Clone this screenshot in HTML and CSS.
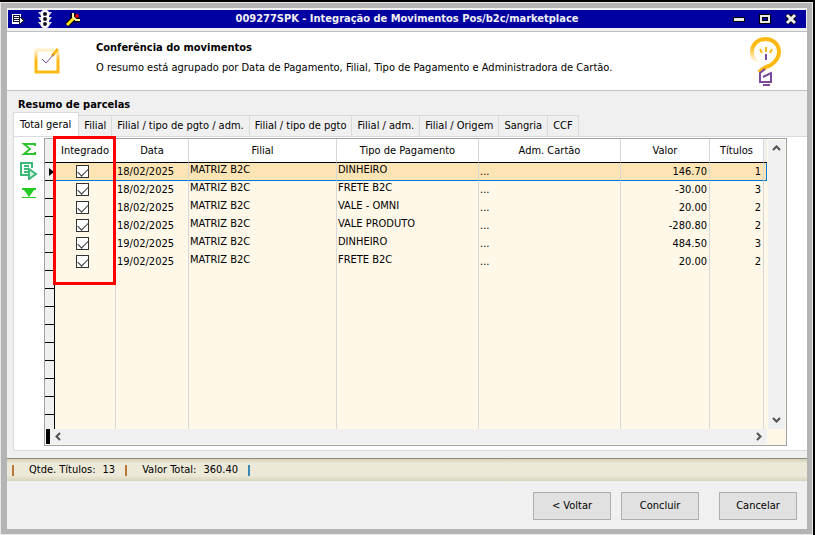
FILE: index.html
```html
<!DOCTYPE html>
<html lang="pt-BR">
<head>
    <meta charset="UTF-8">
    <title>009277SPK - Integração de Movimentos</title>
    <link rel="stylesheet" href="styles.css">
</head>
<body>
    <div class="window">
        <header class="titlebar">
            <div class="title-icons">
                <svg width="14" height="14" viewBox="0 0 14 14" shape-rendering="crispEdges">
                    <path d="M1 2h9v10H1z" fill="#fff"/>
                    <path d="M2 3h7v8H2z" fill="#000080"/>
                    <path d="M2 3h7v8H2z" fill="#101040"/>
                    <path d="M3 4h6v1H3zM3 6h5v1H3zM3 8h5v1H3zM2 10h7v1H2z" fill="#fff"/>
                    <path d="M8 4l5 4.500L8 13z" fill="#fff" stroke="#222" stroke-width="1"/>
                </svg>
                <svg width="16" height="18" viewBox="0 0 16 18">
                    <path d="M1 2h14l-3 4h-8zM1 7h14l-3 4h-8zM1 12h14l-3 4h-8z" fill="#ddd"/>
                    <rect x="4" y="0" width="8" height="18" rx="3" fill="#fff"/>
                    <circle cx="8" cy="4" r="2" fill="#112"/>
                    <circle cx="8" cy="9" r="2" fill="#112"/>
                    <circle cx="8" cy="14" r="2" fill="#112"/>
                </svg>
                <svg width="16" height="16" viewBox="0 0 16 16" fill="none">
                    <path d="M2 14l7-7M8 2v4l3 3h4" stroke="#000" stroke-width="5"/>
                    <path d="M2 14l7-7" stroke="#ffe020" stroke-width="3"/>
                    <path d="M8 2v4l3 3h4" stroke="#fff4a0" stroke-width="2"/>
                    <circle cx="12" cy="5" r="2" fill="#e00000"/>
                </svg>
            </div>
            <h1 class="title">009277SPK - Integração de Movimentos Pos/b2c/marketplace</h1>
            <div class="title-buttons">
                <button class="title-btn" aria-label="Minimizar">
                    <svg width="12" height="12" viewBox="0 0 12 12"><path d="M0 4h12v5H0z"/><path d="M1 5h10v3H1z" fill="#e8e8e8"/></svg>
                </button>
                <button class="title-btn" aria-label="Maximizar">
                    <svg width="12" height="12" viewBox="0 0 12 12"><path d="M0 1h12v10H0z"/><path d="M1 2h10v8H1zM3 4v4h6V4z" fill="#e8e8e8" fill-rule="evenodd"/><path d="M4 5h4v2H4z" fill="#0000a0"/></svg>
                </button>
                <button class="title-btn" aria-label="Fechar">
                    <svg width="12" height="12" viewBox="0 0 12 12"><path d="M2 2l8 8M10 2l-8 8" stroke="#000" stroke-width="5"/><path d="M2 2l8 8M10 2l-8 8" stroke="#eee" stroke-width="3"/></svg>
                </button>
            </div>
        </header>

        <section class="banner">
            <svg class="banner-check" width="28" height="28" viewBox="0 0 28 28" fill="none">
                <defs>
                    <linearGradient id="box" x1="0" y1="0" x2="0" y2="1">
                        <stop offset="0" stop-color="#fff0cc"/>
                        <stop offset="0.5" stop-color="#fdb913"/>
                    </linearGradient>
                </defs>
                <path d="M20 3H2v22h22V5" stroke="url(#box)" stroke-width="3"/>
                <path d="M18 9l6-7" stroke="#fdb913" stroke-width="3"/>
                <path d="M8 12l4 4 8-9" stroke="#7b4a9e" stroke-width="1"/>
            </svg>
            <div class="banner-text">
                <h2>Conferência do movimentos</h2>
                <p>O resumo está agrupado por Data de Pagamento, Filial, Tipo de Pagamento e Administradora de Cartão.</p>
            </div>
            <svg class="banner-bulb" width="34" height="50" viewBox="0 0 34 50" fill="none">
                <defs>
                    <linearGradient id="bulb" x1="0" y1="1" x2="0" y2="0">
                        <stop offset="0" stop-color="#fff"/>
                        <stop offset="0.7" stop-color="#fdb913"/>
                    </linearGradient>
                </defs>
                <path d="M10 27C5 25 3 20 3 16 3 8 9 3 17 3" stroke="url(#bulb)" stroke-width="4"/>
                <path d="M16 3c8 0 14 5 14 13 0 6-4 10-8 13-4 2-9 3-12 7" stroke="#fdb913" stroke-width="4"/>
                <path d="M11 13l2 4M17 11v5M23 13l-2 4" stroke="#fdb913" stroke-width="2"/>
                <path d="M17 18v6M16 33l-5 4v9h11v-9l-8 4M14 49h7" stroke="#7b4a9e" stroke-width="2"/>
            </svg>
        </section>

        <main class="content">
            <h3>Resumo de parcelas</h3>
            <div class="tabs" role="tablist">
                <button class="tab active" role="tab" aria-selected="true">Total geral</button>
                <button class="tab" role="tab">Filial</button>
                <button class="tab" role="tab">Filial / tipo de pgto / adm.</button>
                <button class="tab" role="tab">Filial / tipo de pgto</button>
                <button class="tab" role="tab">Filial / adm.</button>
                <button class="tab" role="tab">Filial / Origem</button>
                <button class="tab" role="tab">Sangria</button>
                <button class="tab" role="tab">CCF</button>
            </div>
            <div class="panel">
                <div class="tools">
                    <button class="tool" aria-label="Somar">
                        <svg width="16" height="16" viewBox="0 0 16 16" fill="none" stroke="#2fc42f" stroke-width="2"><path d="M14 5V3H3l6 5-6 5h11v-2"/></svg>
                    </button>
                    <button class="tool" aria-label="Exportar">
                        <svg width="18" height="18" viewBox="0 0 18 18" fill="none" stroke="#3cb878" stroke-width="2"><path d="M8 13H1V1h11v5M4 4h5M4 7h4M4 10h4"/><path d="M9 7l7 5-7 5z" fill="#d8f0e4"/></svg>
                    </button>
                    <button class="tool" aria-label="Expandir">
                        <svg width="16" height="16" viewBox="0 0 16 16" fill="#22cc22"><path d="M1 3h14v2H1zM3 5h10l-5 7zM1 12h14v1H1z"/></svg>
                    </button>
                </div>
                <div class="grid">
                    <div class="viewport">
                        <table>
                            <colgroup>
                                <col class="c-mark"><col class="c-int"><col class="c-data"><col class="c-filial"><col class="c-tipo"><col><col class="c-valor"><col class="c-tit"><col class="c-end">
                            </colgroup>
                            <thead>
                                <tr><th></th><th>Integrado</th><th>Data</th><th>Filial</th><th>Tipo de Pagamento</th><th>Adm. Cartão</th><th>Valor</th><th>Títulos</th><th></th></tr>
                            </thead>
                            <tbody>
                                <tr class="selected"><td class="mark"><span class="arrow"></span></td><td class="chk"><input type="checkbox" aria-label="Integrado" checked></td><td>18/02/2025</td><td class="txt">MATRIZ B2C</td><td class="txt">DINHEIRO</td><td class="dots">...</td><td class="num">146.70</td><td class="num">1</td><td></td></tr>
                                <tr><td class="mark"></td><td class="chk"><input type="checkbox" aria-label="Integrado" checked></td><td>18/02/2025</td><td class="txt">MATRIZ B2C</td><td class="txt">FRETE B2C</td><td class="dots">...</td><td class="num">-30.00</td><td class="num">3</td><td></td></tr>
                                <tr><td class="mark"></td><td class="chk"><input type="checkbox" aria-label="Integrado" checked></td><td>18/02/2025</td><td class="txt">MATRIZ B2C</td><td class="txt">VALE - OMNI</td><td class="dots">...</td><td class="num">20.00</td><td class="num">2</td><td></td></tr>
                                <tr><td class="mark"></td><td class="chk"><input type="checkbox" aria-label="Integrado" checked></td><td>18/02/2025</td><td class="txt">MATRIZ B2C</td><td class="txt">VALE PRODUTO</td><td class="dots">...</td><td class="num">-280.80</td><td class="num">2</td><td></td></tr>
                                <tr><td class="mark"></td><td class="chk"><input type="checkbox" aria-label="Integrado" checked></td><td>19/02/2025</td><td class="txt">MATRIZ B2C</td><td class="txt">DINHEIRO</td><td class="dots">...</td><td class="num">484.50</td><td class="num">3</td><td></td></tr>
                                <tr><td class="mark"></td><td class="chk"><input type="checkbox" aria-label="Integrado" checked></td><td>19/02/2025</td><td class="txt">MATRIZ B2C</td><td class="txt">FRETE B2C</td><td class="dots">...</td><td class="num">20.00</td><td class="num">2</td><td></td></tr>
                                <tr><td class="mark"></td><td></td><td></td><td></td><td></td><td></td><td></td><td></td><td></td></tr>
                                <tr><td class="mark"></td><td></td><td></td><td></td><td></td><td></td><td></td><td></td><td></td></tr>
                                <tr><td class="mark"></td><td></td><td></td><td></td><td></td><td></td><td></td><td></td><td></td></tr>
                                <tr><td class="mark"></td><td></td><td></td><td></td><td></td><td></td><td></td><td></td><td></td></tr>
                                <tr><td class="mark"></td><td></td><td></td><td></td><td></td><td></td><td></td><td></td><td></td></tr>
                                <tr><td class="mark"></td><td></td><td></td><td></td><td></td><td></td><td></td><td></td><td></td></tr>
                                <tr><td class="mark"></td><td></td><td></td><td></td><td></td><td></td><td></td><td></td><td></td></tr>
                                <tr><td class="mark"></td><td></td><td></td><td></td><td></td><td></td><td></td><td></td><td></td></tr>
                                <tr><td class="mark"></td><td></td><td></td><td></td><td></td><td></td><td></td><td></td><td></td></tr>
                            </tbody>
                        </table>
                    </div>
                    <div class="vscroll">
                        <svg width="9" height="7" viewBox="0 0 9 7"><path d="M1 5l3.500-3.500L8 5"/></svg>
                        <svg width="9" height="7" viewBox="0 0 9 7"><path d="M1 1l3.500 3.500L8 1"/></svg>
                    </div>
                    <div class="hscroll">
                        <svg width="7" height="9" viewBox="0 0 7 9"><path d="M5 1L1.500 4.500 5 8"/></svg>
                        <svg width="7" height="9" viewBox="0 0 7 9"><path d="M1 1l3.500 3.500L1 8"/></svg>
                    </div>
                    <div class="highlight"></div>
                </div>
            </div>
        </main>

        <div class="status">
            <span class="sep"></span>
            <span class="item">Qtde. Títulos:</span><span class="value">13</span>
            <span class="sep"></span>
            <span class="item">Valor Total:</span><span class="value">360.40</span>
            <span class="sep blue"></span>
        </div>

        <footer class="actions">
            <button class="btn">&lt; Voltar</button>
            <button class="btn">Concluir</button>
            <button class="btn cancel">Cancelar</button>
        </footer>
    </div>
</body>
</html>
```
FILE: styles.css
```css
* {
    box-sizing: border-box;
}

body {
    height: 100vh;
    margin: 0;
    padding: 2px 2px 0 0;
    background-color: #000;
    font-family: Tahoma, "DejaVu Sans Condensed", "DejaVu Sans", sans-serif;
    font-size: 11px;
    line-height: 14px;
    color: #000;
}

h1, h2, h3, p {
    margin: 0;
    font-size: 11px;
}

button {
    font: inherit;
    color: inherit;
    padding: 0;
}

.window {
    display: flex;
    flex-direction: column;
    height: 100%;
    border: 6px solid #b4b4b4;
    border-left-width: 7px;
    background-color: #f0f0f0;
    outline: 1px solid #e8e8e8;
    outline-offset: -1px;
    overflow: hidden;
}

.titlebar {
    display: flex;
    align-items: center;
    height: 18px;
    margin: 2px 1px 1px;
    background-color: #0000a0;
    color: #f0f0f0;
}

.title-icons, .title-buttons {
    display: flex;
    align-items: center;
    width: 73px;
}

.title-icons {
    gap: 12px;
    padding-left: 3px;
}

.title-buttons {
    gap: 14px;
}

.title {
    flex: 1;
    text-align: center;
    white-space: nowrap;
}

.title-btn {
    display: flex;
    border: none;
    background: none;
}

.banner {
    display: flex;
    align-items: flex-start;
    height: 60px;
    margin-top: 2px;
    padding: 4px 24px 0 27px;
    background-color: #fff;
    border-top: 1px solid #c0c0c0;
    border-bottom: 1px solid #c0c0c0;
}

.banner-check {
    margin-top: 11px;
}

.banner-text {
    flex: 1;
    padding: 5px 0 0 34px;
}

.banner-text p {
    margin-top: 6px;
}

.content {
    flex: 1;
    display: flex;
    flex-direction: column;
    min-height: 0;
    padding: 7px 0 7px 6px;
}

.content h3 {
    padding-left: 5px;
}

.tabs {
    display: flex;
    align-items: flex-end;
    height: 24px;
}

.tab {
    height: 21px;
    padding: 0 5px;
    border: 1px solid #dadada;
    border-width: 1px 1px 0 0;
    background-color: #f0f0f0;
    white-space: nowrap;
}

.tab.active {
    height: 24px;
    padding: 0 7px 0 6px;
    background-color: #fff;
    border-left-width: 1px;
}

.panel {
    flex: 1;
    display: flex;
    min-height: 0;
    padding: 1px 20px 4px 0;
    background-color: #fff;
    border: 1px solid #dadada;
    border-right: none;
}

.tools {
    width: 30px;
    display: flex;
    flex-direction: column;
    align-items: center;
    gap: 5px;
    padding-top: 3px;
}

.tool {
    display: flex;
    border: none;
    background: none;
}

.grid {
    flex: 1;
    display: grid;
    grid-template-columns: 1fr 19px;
    grid-template-rows: 1fr 16px;
    position: relative;
    min-width: 0;
    border: 1px solid #a0a0a8;
    background-color: #fff8e8;
}

.viewport {
    overflow: hidden;
    min-height: 0;
}

table {
    width: 100%;
    table-layout: fixed;
    border-collapse: separate;
    border-spacing: 0;
}

.c-mark { width: 10px; }
.c-int { width: 61px; }
.c-data { width: 73px; }
.c-filial { width: 148px; }
.c-tipo { width: 142px; }
.c-valor { width: 89px; }
.c-tit { width: 54px; }
.c-end { width: 3px; }

th {
    height: 24px;
    padding: 0;
    font-weight: normal;
    background-color: #fff;
    border-right: 1px solid #d8d8d8;
    border-bottom: 1px solid #000;
}

th:first-child, th:last-child {
    background-color: #f0f0f0;
    border-right: none;
}

td {
    height: 18px;
    padding: 2px 2px 0 1px;
    vertical-align: top;
    white-space: nowrap;
    border-right: 1px solid #d8d8d8;
}

td:last-child {
    border-right: none;
    padding: 0;
}

td.txt {
    padding: 0 0 0 1px;
}

td.num {
    text-align: right;
}

td.mark {
    padding: 0;
    vertical-align: middle;
    background-color: #f0f0f0;
    border-right: 1px solid #000;
    border-bottom: 1px solid #000;
}

td.chk {
    padding: 2px 6px 0 0;
}

.chk input {
    appearance: none;
    display: block;
    width: 13px;
    height: 13px;
    margin: 0 auto;
    border: 1px solid #333;
    background: #fff;
    position: relative;
}

.chk input:checked::after {
    content: "";
    position: absolute;
    left: 1px;
    top: 2px;
    width: 9px;
    height: 5px;
    border: solid #333;
    border-width: 0 0 1px 1px;
    transform: rotate(-45deg);
}

.selected td {
    background-color: #fde4b4;
    border-bottom: 1px solid #0078d7;
}

.selected td:last-child {
    border-right: 1px solid #0078d7;
}

.selected td.mark {
    background-color: #f0f0f0;
    border-bottom-color: #000;
}

.arrow {
    display: block;
    width: 0;
    margin-left: 4px;
    border: solid transparent;
    border-width: 4px 0 4px 5px;
    border-left-color: #000;
}

.vscroll, .hscroll {
    display: flex;
    justify-content: space-between;
    align-items: center;
    background-color: #f0f0f0;
}

.vscroll {
    flex-direction: column;
    margin: 1px 1px 0;
    padding: 5px 0;
}

.hscroll {
    border-left: 4px solid #000;
    margin: 0 0 1px 1px;
    padding: 0 4px 0 5px;
}

.vscroll path, .hscroll path {
    fill: none;
    stroke: #505050;
    stroke-width: 2;
}

/* frame over the "Integrado" column */
.highlight {
    position: absolute;
    left: 8px;
    top: -3px;
    width: 63px;
    height: 149px;
    border: 3px solid #f00;
}

.status {
    display: flex;
    align-items: center;
    height: 23px;
    padding-left: 5px;
    border-top: 1px solid #8c8c7c;
    background: linear-gradient(#d4d0b8, #ece9d8 20%, #ece9d8 75%, #d8d4bc);
}

.sep {
    width: 2px;
    height: 11px;
    background-color: #b87838;
}

.sep.blue {
    background-color: #3888b8;
}

.item {
    margin-left: 15px;
}

.value {
    margin: 0 10px 0 7px;
}

.actions {
    display: flex;
    justify-content: flex-end;
    gap: 10px;
    height: 48px;
    padding: 11px 10px 0 0;
}

.btn {
    width: 78px;
    height: 28px;
    border: 1px solid #adadad;
    background-color: #e1e1e1;
}

.btn.cancel {
    margin-left: 10px;
}
```
